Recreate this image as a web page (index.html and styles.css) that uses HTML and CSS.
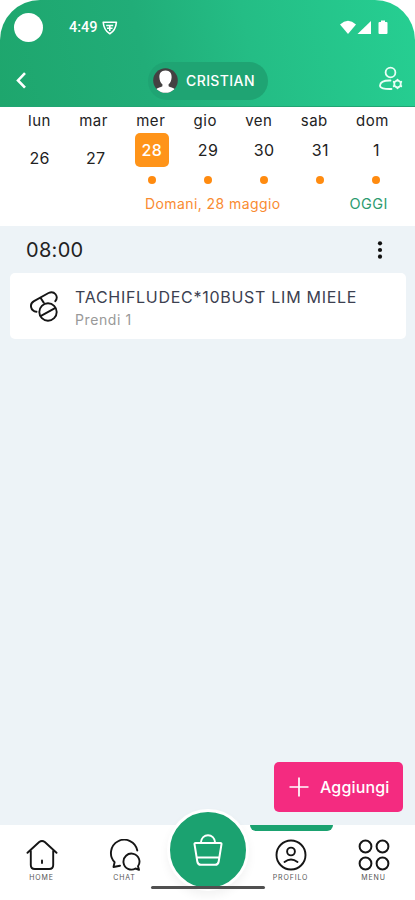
FILE: index.html
```html
<!DOCTYPE html>
<html lang="it">
<head>
<meta charset="utf-8">
<meta name="viewport" content="width=device-width, initial-scale=1">
<title>Promemoria</title>
<link rel="stylesheet" href="styles.css">
</head>
<body>
<div class="app">
  <header class="header">
    <div class="status">
      <span class="camera"></span>
      <span class="clock">4:49</span>
      <svg class="shield" width="16" height="14" viewBox="0 0 16 14" fill="none" stroke="#fff" stroke-width="1.6" stroke-linejoin="round"><path d="M1.2 1.2h13.2C14 6 12.5 10 7.800 12.800 3.200 10 1.600 6 1.200 1.200Z"/><path d="M4.200 4.500h7M5 7.200h5.500M7.800 4v6"/></svg>
      <svg class="signals" width="48" height="16" viewBox="0 0 48 16" fill="#fff"><path d="M0 4.500Q8-2.800 16 4.500L8 14Z"/><path d="M31 1v13H17.500Z"/><path d="M39.500 2h1.500V.5h4V2h1.500q1 0 1 1v10q0 1-1 1h-7q-1 0-1-1V3q0-1 1-1Z"/></svg>
    </div>
    <div class="titlebar">
      <svg class="back" width="10" height="17" viewBox="0 0 10 17" fill="none" stroke="#fff" stroke-width="2.600"><path d="m9 1.200-7 7.200 7 7.300"/></svg>
      <div class="person">
        <svg width="25" height="25" viewBox="0 0 25 25"><defs><clipPath id="avatar"><circle cx="12.500" cy="12.500" r="12.300"/></clipPath></defs><g clip-path="url(#avatar)"><path fill="#444142" d="M0 0h25v25H0z"/><path fill="#fff" d="M12.500 2.500c4.500 0 6.400 3 6.100 7-.2 3.300-1.400 5.500-3 6.800v1.900c1.500 1.200 4.700 1.300 6.400 3V25H3v-3.800c1.700-1.700 4.900-1.800 6.400-3v-1.900c-1.600-1.300-2.800-3.500-3-6.800-.3-4 1.600-7 6.100-7Z"/></g></svg>
        <span class="person-name">CRISTIAN</span>
      </div>
      <svg class="user-settings" width="24" height="25" viewBox="0 0 24 25" fill="none" stroke="#e9fff6" stroke-width="1.800" stroke-linecap="round" stroke-linejoin="round"><circle cx="11.500" cy="6.500" r="4.900"/><path d="M11.500 14.500C5 14.300 1.300 16.300 1 19.500c0 2.700 4 3.700 11.500 3.500"/><circle cx="18.500" cy="18" r="3.300"/><path stroke-width="2" d="M18.500 13.700v.4M18.500 21.900v.4M14.800 15.800l.3.200M21.900 20l.3.200M14.800 20.200l.3-.2M21.900 16l.3-.2"/></svg>
    </div>
  </header>

  <section class="calendar">
    <div class="weekdays"><span>lun</span><span>mar</span><span>mer</span><span>gio</span><span>ven</span><span>sab</span><span>dom</span></div>
    <div class="days">
      <div class="day empty"><span>26</span></div>
      <div class="day empty"><span>27</span></div>
      <div class="day selected"><span>28</span><i></i></div>
      <div class="day"><span>29</span><i></i></div>
      <div class="day"><span>30</span><i></i></div>
      <div class="day"><span>31</span><i></i></div>
      <div class="day"><span>1</span><i></i></div>
    </div>
    <div class="caption"><span class="date">Domani, 28 maggio</span><span class="today">OGGI</span></div>
  </section>

  <main class="content">
    <div class="slot"><span class="hour">08:00</span><svg width="6" height="18" viewBox="0 0 6 18" fill="#111"><circle cx="3" cy="2.300" r="2.100"/><circle cx="3" cy="9" r="2.100"/><circle cx="3" cy="15.700" r="2.100"/></svg></div>
    <article class="card">
      <svg class="pills" width="28" height="31" viewBox="0 0 28 31" fill="none" stroke="#151515" stroke-width="1.900" stroke-linecap="round"><path d="M6.500 20.800C.5 20-1 13 4 10.200L18.500 2c6-2.800 10.500 3.400 6.800 8.200M10.500 6.800l3.200 4.800"/><circle cx="18" cy="21" r="8.700"/><path d="m11 24.800 14-7.600"/></svg>
      <div class="info"><span class="drug">TACHIFLUDEC*10BUST LIM MIELE</span><span class="dose">Prendi 1</span></div>
    </article>
    <button class="add"><svg width="20" height="20" viewBox="0 0 20 20" stroke="#fff" stroke-width="1.700"><path d="M10 .5v19M.5 10h19"/></svg><span>Aggiungi</span></button>
  </main>

  <nav class="nav">
    <div class="tab"><svg width="32" height="32" viewBox="0 0 32 32" fill="none" stroke="#151515" stroke-width="1.900" stroke-linejoin="round" stroke-linecap="round"><path d="M1.500 13.800 13.200 3Q16 .8 18.800 3L30.500 13.800M4.800 12v14q0 4 4 4h14.400q4 0 4-4V12"/><path d="M16 21.500V24"/></svg><span>HOME</span></div>
    <div class="tab"><svg width="32" height="32" viewBox="0 0 32 32" fill="none" stroke="#151515" stroke-width="1.900" stroke-linejoin="round" stroke-linecap="round"><path d="M28.300 11.500A13.300 13.300 0 1 0 5.600 23.200L4.500 28l6.500-1.300"/><path d="M29 27.200A8 8 0 1 0 26.500 29.500L30 30.800Z"/></svg><span>CHAT</span></div>
    <div class="tab shop"><div class="fab"><svg width="30" height="32" viewBox="0 0 30 32" fill="none" stroke="#fff" stroke-width="2" stroke-linejoin="round"><path d="M2.500 9h25q1.200 0 1 1.200l-2.800 17.300q-.5 3.300-3.500 3.300H7.800q-3 0-3.500-3.300L1.500 10.200Q1.300 9 2.500 9ZM7.800 9C8.500-1.300 21.500-1.300 22.200 9M4.200 23.500h21.600"/></svg></div></div>
    <div class="tab active"><svg width="32" height="32" viewBox="0 0 32 32" fill="none" stroke="#151515" stroke-width="1.900" stroke-linecap="round"><circle cx="16" cy="16" r="14.500"/><circle cx="16" cy="12.500" r="3.900"/><path d="M9.500 23q6.500-5 13 0"/></svg><span>PROFILO</span></div>
    <div class="tab"><svg width="32" height="32" viewBox="0 0 32 32" fill="none" stroke="#151515" stroke-width="2"><circle cx="7.500" cy="7.500" r="5.900"/><circle cx="24.500" cy="7.500" r="5.900"/><circle cx="7.500" cy="24.500" r="5.900"/><circle cx="24.500" cy="24.500" r="5.900"/></svg><span>MENU</span></div>
    <div class="gesture"></div>
  </nav>
</div>
</body>
</html>
```
FILE: styles.css
```css
* { box-sizing: border-box; }
body { margin: 0; background: #fff; font-family: Inter, "Liberation Sans", sans-serif; color: #222; }
svg { display: block; flex: none; }
.app { width: 415px; height: 900px; display: flex; flex-direction: column; overflow: hidden; }
.header { height: 107px; flex: none; border-radius: 40px 40px 0 0; background: linear-gradient(78deg, #1ea66d 0%, #21ad78 35%, #24bd85 60%, #26cf92 100%); border-bottom: 1px solid #20a573; }
.status { height: 54px; display: flex; align-items: center; padding: 0 27px 0 14px; }
.camera { width: 29px; height: 29px; border-radius: 50%; background: #fff; }
.clock { margin-left: 26px; width: 29px; color: #fff; font: 500 14.5px/16px Roboto, sans-serif; white-space: nowrap; margin-top: 2px; }
.shield { margin-left: 4px; margin-top: 2px; }
.signals { margin-left: auto; margin-top: 1px; }
.titlebar { height: 53px; display: flex; align-items: center; padding: 0 12px 0 16px; }
.person { margin-left: 122px; width: 120px; height: 38px; border-radius: 19px; background: #1fa473; display: flex; align-items: center; gap: 8px; padding-left: 5px; color: #fff; }
.person-name { font-size: 14px; font-weight: 500; letter-spacing: .4px; }
.user-settings { margin-left: auto; margin-top: -4px; }
.calendar { height: 119px; flex: none; background: #fff; }
.weekdays { height: 26px; display: flex; justify-content: space-between; padding: 4px 26px 0 28px; font-size: 15px; line-height: 20px; letter-spacing: .55px; }
.days { height: 54px; display: grid; grid-template-columns: repeat(7, 56.15px); padding-left: 11.5px; font-size: 16px; letter-spacing: .3px; }
.day { display: flex; flex-direction: column; align-items: center; }
.day span { width: 34px; height: 34px; line-height: 34px; text-align: center; border-radius: 5px; }
.day i { width: 8px; height: 8px; margin-top: 9px; border-radius: 50%; background: #ff8b10; }
.day.empty { padding-top: 8px; }
.day.selected span { background: #ff9419; color: #fff; font-weight: 500; }
.caption { display: flex; justify-content: space-between; padding: 7px 27px 0 145px; font-size: 14px; line-height: 20px; letter-spacing: .42px; }
.date { color: #f98b31; }
.today { color: #2c9b70; font-size: 14.5px; letter-spacing: .5px; }
.content { flex: 1; background: #edf3f7; display: flex; flex-direction: column; padding: 0 9px 13px 10px; }
.slot { height: 47px; display: flex; align-items: center; justify-content: space-between; padding: 0 23px 0 16px; }
.hour { font-size: 20px; letter-spacing: .3px; }
.card { height: 66px; border-radius: 5px; background: #fff; display: flex; align-items: center; padding-left: 20px; gap: 17px; }
.info { display: flex; flex-direction: column; padding-top: 3px; }
.drug { font-size: 16px; line-height: 23px; letter-spacing: .72px; color: #3c4050; white-space: nowrap; }
.dose { font-size: 14px; line-height: 21px; letter-spacing: .6px; color: #999; }
.add { margin-top: auto; align-self: flex-end; margin-right: 3px; width: 129px; height: 50px; border: 0; border-radius: 5px; background: #f42b80; color: #fff; font: 500 16px Inter, sans-serif; letter-spacing: .15px; display: flex; align-items: center; gap: 11px; padding: 0 0 0 15px; }
.nav { height: 75px; flex: none; background: #fff; display: grid; grid-template-columns: repeat(5, 83px); position: relative; }
.tab { display: flex; flex-direction: column; align-items: center; padding-top: 14px; }
.tab span { font-size: 7px; line-height: 9px; margin-top: 2px; letter-spacing: .85px; color: #555; }
.active { position: relative; }
.active::before { content: ""; position: absolute; top: 0; left: 1px; width: 83px; height: 6px; border-radius: 0 0 6px 6px; background: #1ba270; }
.tab.shop { padding: 0; }
.fab { flex: none; width: 82px; height: 82px; margin-top: -16px; border: 3px solid #fff; border-radius: 50%; background: #1ba270; display: flex; align-items: center; justify-content: center; box-shadow: 0 5px 10px rgb(0 0 0 / 5%); position: relative; }
.gesture { position: absolute; left: 151px; top: 61px; width: 114px; height: 3px; border-radius: 2px; background: #505050; }
```
